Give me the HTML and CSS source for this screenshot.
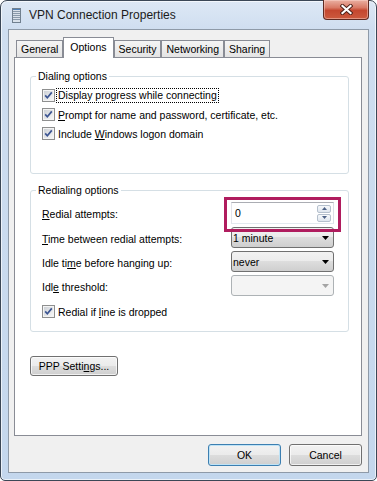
FILE: index.html
```html
<!DOCTYPE html>
<html>
<head>
<meta charset="utf-8">
<title>VPN Connection Properties</title>
<link rel="stylesheet" href="styles.css">
</head>
<body>
<svg width="0" height="0" class="defs">
  <defs>
    <linearGradient id="cbg" x1="0" y1="0" x2="1" y2="1">
      <stop offset="0" stop-color="#cdd1d6"/>
      <stop offset="1" stop-color="#f7f7f7"/>
    </linearGradient>
    <symbol id="chk" viewBox="0 0 13 13">
      <rect x="0.5" y="0.5" width="12" height="12" fill="#f4f4f4" stroke="#8e8f8f"/>
      <rect x="2" y="2" width="9" height="9" fill="url(#cbg)"/>
      <path d="M3.2 6.4 L5.3 8.7 L9.8 3.4" fill="none" stroke="#3c5592" stroke-width="1.7"/>
    </symbol>
  </defs>
</svg>
<div class="window">
  <div class="titlebar">
    <svg class="appicon" width="9" height="15" viewBox="0 0 9 15">
      <rect x="0.5" y="0.5" width="8" height="14" fill="#d9e1ea" stroke="#71808f"/>
      <path d="M1 3.5 H8 M1 5.5 H8 M1 7.5 H8 M1 9.5 H8 M1 11.5 H8" stroke="#8a9aab" stroke-width="1"/>
      <rect x="1" y="1" width="7" height="1" fill="#4f80b8"/>
    </svg>
    <span class="title">VPN Connection Properties</span>
    <div class="close">
      <svg width="13" height="11" viewBox="0 0 13 11">
        <path d="M2.5 2 L10.5 9 M10.5 2 L2.5 9" stroke="#4a1f17" stroke-width="4" stroke-linecap="square"/>
        <path d="M2.5 2 L10.5 9 M10.5 2 L2.5 9" stroke="#ffffff" stroke-width="2.2" stroke-linecap="square"/>
      </svg>
    </div>
  </div>
  <div class="client">
    <div class="tabs">
      <div class="tab">General</div>
      <div class="tab active">Options</div>
      <div class="tab">Security</div>
      <div class="tab">Networking</div>
      <div class="tab">Sharing</div>
    </div>
    <div class="panel">
      <fieldset class="group g1">
        <legend>Dialing options</legend>
        <div class="rows">
          <div class="check"><svg class="box" width="13" height="13"><use href="#chk"/></svg><span class="focus">Display progress while connecting</span></div>
          <div class="check"><svg class="box" width="13" height="13"><use href="#chk"/></svg><span><u>P</u>rompt for name and password, certificate, etc.</span></div>
          <div class="check"><svg class="box" width="13" height="13"><use href="#chk"/></svg><span>Include <u>W</u>indows logon domain</span></div>
        </div>
      </fieldset>
      <fieldset class="group g2">
        <legend>Redialing options</legend>
        <div class="rows">
          <div class="form">
            <span class="lbl"><u>R</u>edial attempts:</span>
            <div class="spin">
              <span class="val">0</span>
              <div class="spinbtns">
                <div class="sb"><svg width="5" height="3" viewBox="0 0 5 3"><path d="M0 3 L2.5 0 L5 3 Z" fill="#4d6185"/></svg></div>
                <div class="sb"><svg width="5" height="3" viewBox="0 0 5 3"><path d="M0 0 L2.5 3 L5 0 Z" fill="#4d6185"/></svg></div>
              </div>
              <div class="highlight"></div>
            </div>
            <span class="lbl"><u>T</u>ime between redial attempts:</span>
            <div class="combo"><span>1 minute</span><svg width="7" height="4" viewBox="0 0 7 4"><path d="M0 0 H7 L3.5 4 Z" fill="#000"/></svg></div>
            <span class="lbl">Idle ti<u>m</u>e before hanging up:</span>
            <div class="combo"><span>never</span><svg width="7" height="4" viewBox="0 0 7 4"><path d="M0 0 H7 L3.5 4 Z" fill="#000"/></svg></div>
            <span class="lbl">Idl<u>e</u> threshold:</span>
            <div class="combo disabled"><span></span><svg width="7" height="4" viewBox="0 0 7 4"><path d="M0 0 H7 L3.5 4 Z" fill="#a4a4a4"/></svg></div>
          </div>
          <div class="check last"><svg class="box" width="13" height="13"><use href="#chk"/></svg><span>Redial if <u>l</u>ine is dropped</span></div>
        </div>
      </fieldset>
      <button class="btn ppp">PPP Setti<u>n</u>gs...</button>
    </div>
    <div class="actions">
      <button class="btn default">OK</button>
      <button class="btn">Cancel</button>
    </div>
  </div>
</div>
</body>
</html>
```
FILE: styles.css
```css
* { box-sizing: border-box; }
html, body { margin: 0; padding: 0; background: #fff; }
body {
  font-family: "Liberation Sans", Arial, sans-serif;
  font-size: 10.5px;
  color: #000;
  width: 377px;
  height: 481px;
  overflow: hidden;
}
.defs { position: absolute; width: 0; height: 0; }
u { text-underline-offset: 1px; }

.window {
  width: 377px;
  height: 481px;
  border: 1px solid #3b4756;
  border-radius: 7px 7px 5px 5px;
  background: linear-gradient(#dde8f5 0, #cfdef0 28px, #c4d7ed 100%);
  box-shadow: inset 0 0 0 1px rgba(255,255,255,0.65);
  padding: 0 7px 7px;
  display: flex;
  flex-direction: column;
}

.titlebar {
  height: 28px;
  display: flex;
  align-items: center;
}
.appicon { margin-left: 4px; flex: none; }
.title {
  margin-left: 8px;
  font-size: 12px;
  color: #1b1b1b;
}
.close {
  margin-left: auto;
  align-self: flex-start;
  margin-top: -1px;
  width: 46px;
  height: 20px;
  border: 1px solid #5e2a22;
  border-top: none;
  border-radius: 0 0 4px 4px;
  background: linear-gradient(#eab0a2 0%, #d97a66 40%, #c4472f 55%, #cc5a3e 100%);
  box-shadow: inset 0 0 0 1px rgba(255,220,210,0.45);
  display: flex;
  align-items: center;
  justify-content: center;
}

.client {
  flex: 1;
  border: 1px solid #8e9aa8;
  background: #f0f0f0;
  padding: 7px 6px 0 5px;
  display: flex;
  flex-direction: column;
}

.tabs {
  display: flex;
  align-items: flex-end;
  margin-left: 2px;
  margin-bottom: -1px;
  position: relative;
  z-index: 1;
}
.tab {
  height: 17px;
  margin-bottom: 1px;
  padding: 0 4px;
  border: 1px solid #898c95;
  border-bottom: none;
  background: linear-gradient(#f4f4f4, #e4e4e4);
  display: flex;
  align-items: center;
}
.tab.active {
  height: 21px;
  margin-bottom: 0;
  padding: 0 6px 3px;
  background: #fff;
}

.panel {
  height: 379px;
  border: 1px solid #898c95;
  background: #fff;
  padding: 0 12px 0 15px;
  display: flex;
  flex-direction: column;
  align-items: flex-start;
}

.group {
  margin: 0;
  padding: 0;
  width: 319px;
  border: 1px solid #d5dfe5;
  border-radius: 3px;
  min-width: 0;
}
.group legend {
  margin-left: 5px;
  padding: 0 2px;
  line-height: 13px;
}
.g1 { margin-top: 12px; }
.g2 { margin-top: 10px; }
.rows { padding-left: 11px; }
.g1 .rows { padding-top: 3px; padding-bottom: 30px; }
.g2 .rows { padding-top: 5px; padding-bottom: 10px; }

.check {
  display: flex;
  align-items: center;
  height: 19px;
  gap: 3px;
}
.check .box { flex: none; }
.check.last { margin-top: 6px; }
.focus {
  outline: 1px dotted #000;
  outline-offset: 0;
  padding: 0 1px;
  margin-left: -1px;
  line-height: 13px;
}

.form {
  display: grid;
  grid-template-columns: 189px 103px;
  row-gap: 3px;
  align-items: center;
}
.lbl { padding-top: 2px; }

.spin {
  position: relative;
  height: 22px;
  border: 1px solid #abadb3;
  border-color: #abadb3 #dbdfe6 #e3e9ef #e2e3ea;
  background: #fff;
  display: flex;
  align-items: center;
  padding-left: 3px;
}
.spinbtns {
  margin-left: auto;
  margin-right: 2px;
  display: flex;
  flex-direction: column;
  gap: 1px;
}
.sb {
  width: 14px;
  height: 8px;
  border: 1px solid #b5c0cd;
  border-radius: 2px;
  background: linear-gradient(#f7f9fb, #dfe6ee);
  display: flex;
  align-items: center;
  justify-content: center;
}
.highlight {
  position: absolute;
  left: -8px;
  top: -6px;
  width: 117px;
  height: 35px;
  border: 3px solid #b01c5e;
}

.combo {
  height: 21px;
  border: 1px solid #707070;
  border-radius: 3px;
  background: linear-gradient(#f2f2f2 0%, #ebebeb 50%, #dddddd 50%, #cfcfcf 100%);
  display: flex;
  align-items: center;
  justify-content: space-between;
  padding: 0 4px 0 1px;
}
.combo.disabled {
  border-color: #adb2b5;
  background: #f4f4f4;
}

.btn {
  font-family: "Liberation Sans", Arial, sans-serif;
  font-size: 10.5px;
  color: #000;
  border: 1px solid #707070;
  border-radius: 3px;
  background: linear-gradient(#f2f2f2 0%, #ebebeb 50%, #dddddd 50%, #cfcfcf 100%);
  box-shadow: inset 0 0 0 1px rgba(255,255,255,0.7);
  padding: 0;
  margin: 0;
}
.ppp {
  margin-top: 24px;
  width: 88px;
  height: 20px;
}
.actions {
  display: flex;
  justify-content: flex-end;
  gap: 8px;
  margin-top: 8px;
}
.actions .btn { width: 73px; height: 22px; }
.btn.default {
  border-color: #3c7fb1;
  box-shadow: inset 0 0 0 1px #bfe3f6;
}
```
